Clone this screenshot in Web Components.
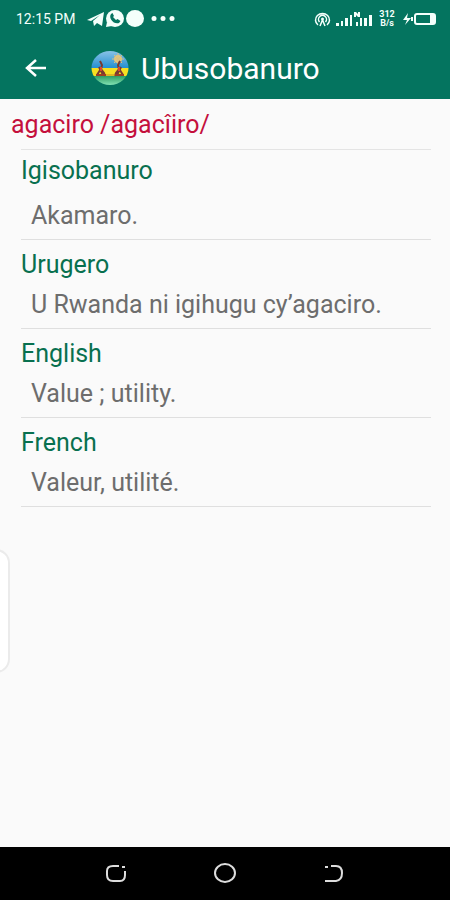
<!DOCTYPE html>
<html lang="rw">
<head>
<meta charset="utf-8">
<meta name="viewport" content="width=device-width, initial-scale=1">
<title>Ubusobanuro</title>
<style>
html, body { margin: 0; min-height: 100%; background: #fafafa; }
body { font-family: Roboto, "Liberation Sans", sans-serif; }
</style>
</head>
<body>
<dictionary-screen></dictionary-screen>
<script>
function define(name, html) {
  const template = document.createElement('template');
  template.innerHTML = html;
  customElements.define(name, class extends HTMLElement {
    constructor() {
      super();
      this.attachShadow({ mode: 'open' }).append(template.content.cloneNode(true));
    }
  });
}

define('status-bar', `
<style>
:host { display: flex; justify-content: space-between; align-items: center; height: 37px; padding: 0 14px 0 16px; color: #f4fffb; }
.group { display: flex; align-items: center; }
.time { font-size: 14px; line-height: 18px; font-weight: 400; margin-right: 12px; }
.rate { font-size: 9px; line-height: 9px; font-weight: 700; text-align: center; width: 18px; margin: 0 7px 0 4px; }
svg { display: block; fill: currentColor; }
</style>
<div class="group">
  <span class="time">12:15 PM</span>
  <svg width="90" height="20" viewBox="0 0 90 20">
    <path d="M0 11 17 3l-2 14-5-3-3 3-1-5 7-6-9 6z"/>
    <path d="m20 13-1 5 6-1z"/>
    <ellipse cx="28" cy="9.500" rx="9" ry="8.500"/>
    <path fill="#04745f" d="M24 5c-3 4 3 11 8 9l1.500-2-3-2-1.500 1-3-3 1-1-1.500-3z"/>
    <ellipse cx="48" cy="9.500" rx="9" ry="8.500"/>
    <circle cx="67" cy="9.500" r="2.500"/><circle cx="76" cy="9.500" r="2.500"/><circle cx="85" cy="9.500" r="2.500"/>
  </svg>
</div>
<div class="group">
  <svg width="60" height="20" viewBox="0 0 60 20">
    <g fill="none" stroke="currentColor" stroke-width="1.500">
      <path d="M4 16a7 6.500 0 1 1 9 0M5.500 13a4 4 0 1 1 6 0"/>
      <path d="m6 17 2.500-6 2.500 6"/>
    </g>
    <circle cx="8.500" cy="10" r="1.500"/>
    <path d="M22 14h3v3h-3zM27 12h2v5h-2zM31 9h3v8h-3zM36 6h2v11h-2zM40 3h2l2 2V3h2v5h-2l-2-2v2h-2zM42 13h2v4h-2zM46 9h2v8h-2zM50 9h3v8h-3zM55 6h3v11h-3z"/>
  </svg>
  <div class="rate">312<br>B/s</div>
  <svg width="33" height="16" viewBox="0 0 33 16">
    <path d="m5 2-5 7h4l-2 5 6-7H4zM8 6h2v4H8z"/>
    <rect x="12" y="3" width="20" height="10" rx="2" fill="none" stroke="currentColor" stroke-width="2"/>
    <path d="M27 4h4v8h-4z"/>
  </svg>
</div>`);

define('app-bar', `
<style>
:host { display: flex; align-items: center; height: 62px; padding: 0 18px 0 16px; color: #fff; }
button { display: grid; place-items: center; width: 40px; height: 48px; padding: 0; border: 0; background: none; color: inherit; }
svg { display: block; }
.logo { margin: 0 12px 0 35px; }
h1 { margin: 0; padding-top: 2px; font-size: 30px; line-height: 36px; font-weight: 400; }
</style>
<button type="button" aria-label="Back">
  <svg width="24" height="22" viewBox="0 0 24 22" fill="none" stroke="currentColor" stroke-width="2.500"><path d="M22 11H3M12 3l-9 8 9 8"/></svg>
</button>
<svg class="logo" width="38" height="36" viewBox="0 0 38 36">
  <defs>
    <clipPath id="disc"><ellipse cx="19" cy="18" rx="18.500" ry="17"/></clipPath>
    <linearGradient id="sky" x1="0" y1="0" x2="0" y2="1"><stop offset="0" stop-color="#8fc5e8"/><stop offset="1" stop-color="#238fd0"/></linearGradient>
    <linearGradient id="grass" x1="0" y1="0" x2="0" y2="1"><stop offset="0" stop-color="#2e9d63"/><stop offset="1" stop-color="#8aeabc"/></linearGradient>
  </defs>
  <g clip-path="url(#disc)">
    <path fill="url(#sky)" d="M0 0h38v18H0z"/>
    <path fill="#f7df22" d="M0 18h38v8H0z"/>
    <path fill="url(#grass)" d="M0 26h38v10H0z"/>
    <circle cx="27" cy="9" r="4" fill="#e8c778"/>
    <path d="m27 3 0 12M21 9h12M23 5l8 8M31 5l-8 8" stroke="#d9bf83"/>
    <g fill="none" stroke="#783a32" stroke-width="2">
      <path d="m9 11 2 4-1 4 3 4 1 3M11 17l-5 8M8 17l4 8"/>
      <path d="m29 11-2 4 1 4-3 4-1 3M27 17l5 8M30 17l-4 8"/>
    </g>
    <path d="M5 25h10M24 25h9" stroke="#9c3c22" stroke-width="2"/>
    <path d="M10 17v4M28 17v4" stroke="#d94730" stroke-width="2"/>
    <path d="M15 25h9" stroke="#c48d24"/>
  </g>
</svg>
<h1><slot></slot></h1>`);

define('head-word', `
<style>
:host { display: block; padding: 11px 19px 9px 11px; color: #c40f3c; }
h2 { margin: 0; font-size: 25px; line-height: 30px; font-weight: 400; }
</style>
<h2><slot></slot></h2>`);

define('dictionary-entry', `
<style>
:host { display: block; margin: 0 19px 0 21px; padding: 10px 0 8px; border-bottom: 1px solid #dfdfdf; }
:host([first]) { padding-top: 6px; border-top: 1px solid #e4e4e4; }
h3 { margin: 0 0 10px; font-size: 25px; line-height: 30px; font-weight: 400; color: #08704f; }
:host([first]) h3 { margin-bottom: 15px; }
p { margin: 0 0 0 10px; font-size: 25px; line-height: 30px; color: #6d6d6d; }
</style>
<h3><slot name="label"></slot></h3>
<p><slot></slot></p>`);

define('edge-handle', `
<style>
:host { display: block; position: absolute; left: -12px; top: 61%; width: 20px; height: 120px; border: 2px solid #ebebeb; border-left: 0; border-radius: 0 14px 14px 0; background: #fff; }
</style>`);

define('navigation-bar', `
<style>
:host { display: block; padding: 2px 0 3px; background: #000; color: #ddd; }
button { display: grid; place-items: center; width: 48px; height: 48px; padding: 0; border: 0; background: none; color: inherit; }
svg { display: block; fill: none; stroke: currentColor; stroke-width: 2; }
nav { display: flex; justify-content: center; gap: 61px; }
</style>
<nav>
  <button type="button" aria-label="Recent apps"><svg width="22" height="20" viewBox="0 0 22 20"><path d="M14 3H8Q2 3 2 8v4q0 6 6 6h7q5 0 5-6V8M17 4h3"/></svg></button>
  <button type="button" aria-label="Home"><svg width="24" height="22" viewBox="0 0 24 22"><ellipse cx="12" cy="11" rx="10" ry="9"/></svg></button>
  <button type="button" aria-label="Back"><svg width="22" height="20" viewBox="0 0 22 20"><path d="M2 4h3M8 3h5q6 0 6 7t-6 8H2" /></svg></button>
</nav>`);

define('dictionary-screen', `
<style>
:host { display: flex; flex-direction: column; min-height: 100vh; position: relative; overflow: hidden; background: #fafafa; }
header { background: #04745f; }
main { flex: 1; }
</style>
<header><status-bar></status-bar><app-bar>Ubusobanuro</app-bar></header>
<main>
  <head-word>agaciro /agacîiro/</head-word>
  <dictionary-entry first><span slot="label">Igisobanuro</span>Akamaro.</dictionary-entry>
  <dictionary-entry><span slot="label">Urugero</span>U Rwanda ni igihugu cy’agaciro.</dictionary-entry>
  <dictionary-entry><span slot="label">English</span>Value ; utility.</dictionary-entry>
  <dictionary-entry><span slot="label">French</span>Valeur, utilité.</dictionary-entry>
</main>
<edge-handle></edge-handle>
<navigation-bar></navigation-bar>`);
</script>
</body>
</html>
